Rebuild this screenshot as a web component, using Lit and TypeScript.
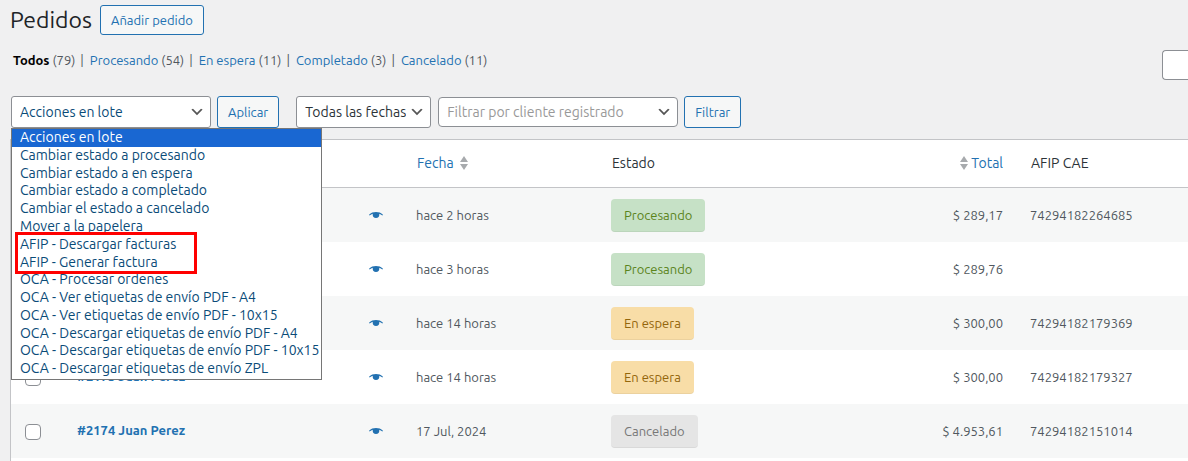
import { LitElement, html, css, svg } from "lit";
import { customElement } from "lit/decorators.js";
import { classMap } from "lit/directives/class-map.js";

interface Order {
  title: string;
  date: string;
  status: "processing" | "on-hold" | "cancelled";
  total: string;
  cae: string;
}

const STATUS_LABELS = {
  processing: "Procesando",
  "on-hold": "En espera",
  cancelled: "Cancelado",
};

const ORDERS: Order[] = [
  { title: "", date: "hace 2 horas", status: "processing", total: "$ 289,17", cae: "74294182264685" },
  { title: "", date: "hace 3 horas", status: "processing", total: "$ 289,76", cae: "" },
  { title: "", date: "hace 14 horas", status: "on-hold", total: "$ 300,00", cae: "74294182179369" },
  { title: "#2175 Juan Perez", date: "hace 14 horas", status: "on-hold", total: "$ 300,00", cae: "74294182179327" },
  { title: "#2174 Juan Perez", date: "17 Jul, 2024", status: "cancelled", total: "$ 4.953,61", cae: "74294182151014" },
];

const VIEWS = [
  { label: "Todos", count: 79, current: true },
  { label: "Procesando", count: 54, current: false },
  { label: "En espera", count: 11, current: false },
  { label: "Completado", count: 3, current: false },
  { label: "Cancelado", count: 11, current: false },
];

const BULK_ACTIONS = [
  "Acciones en lote",
  "Cambiar estado a procesando",
  "Cambiar estado a en espera",
  "Cambiar estado a completado",
  "Cambiar el estado a cancelado",
  "Mover a la papelera",
  "AFIP - Descargar facturas",
  "AFIP - Generar factura",
  "OCA - Procesar ordenes",
  "OCA - Ver etiquetas de envío PDF - A4",
  "OCA - Ver etiquetas de envío PDF - 10x15",
  "OCA - Descargar etiquetas de envío PDF - A4",
  "OCA - Descargar etiquetas de envío PDF - 10x15",
  "OCA - Descargar etiquetas de envío ZPL",
];

const chevron = html`<svg class="chevron" viewBox="0 0 20 20" aria-hidden="true">
  ${svg`<path d="M5 6l5 5 5-5 2 1-7 7-7-7 2-1z" fill="#555"/>`}
</svg>`;

const sorter = html`<svg class="sorter" viewBox="0 0 8 14" aria-hidden="true">
  ${svg`<path d="M4 0l4 6H0zM0 8h8l-4 6z" fill="#a7aaad"/>`}
</svg>`;

const eye = html`<svg class="eye" viewBox="0 0 14 8" aria-hidden="true">
  ${svg`<path d="M0 3.800C2 1.700 4.400 1 7 1s5 .7 7 2.800l-.6.8C12.300 3.700 11.300 3.100 10.200 2.700c.1.300.1.600.1.900A3.300 3.300 0 0 1 7 7a3.300 3.300 0 0 1-3.300-3.400c0-.3 0-.6.1-.9C2.700 3.100 1.700 3.700.6 4.600z" fill="#2271b1"/>`}
</svg>`;

@customElement("app-root")
export class AppRoot extends LitElement {
  static styles = css`
    :host {
      display: block;
      font-family: Ubuntu, "Noto Sans", sans-serif;
      font-size: 13px;
      line-height: 20px;
      color: #50575e;
    }
    * {
      box-sizing: border-box;
    }
    .page {
      display: flex;
      flex-direction: column;
      height: 100vh;
      overflow: hidden;
      background: #f0f0f1;
    }
    a {
      color: #2271b1;
      text-decoration: none;
    }
    .heading {
      display: flex;
      align-items: center;
      gap: 8px;
      padding: 5px 10px 0;
    }
    h1 {
      margin: 0;
      font-size: 23px;
      line-height: 30px;
      font-weight: 400;
      color: #1d2327;
    }
    button {
      height: 32px;
      padding: 0 10px;
      border: 1px solid #2271b1;
      border-radius: 3px;
      background: #f6f7f7;
      color: #2271b1;
      font: inherit;
      white-space: nowrap;
    }
    .heading button {
      height: 30px;
    }
    .views-row {
      display: flex;
      justify-content: space-between;
      margin-top: 15px;
    }
    .views {
      display: flex;
      margin: 0;
      padding: 0 0 0 13px;
      list-style: none;
    }
    .views li + li::before {
      content: "|";
      padding: 0 6px 0 5px;
    }
    .views .current {
      color: #000;
      font-weight: 600;
    }
    .search {
      width: 26px;
      height: 30px;
      border: 1px solid #8c8f94;
      border-right: 0;
      border-radius: 4px 0 0 4px;
      background: #fff;
    }
    .toolbar {
      display: flex;
      align-items: center;
      margin: 16px 0 11px;
      padding-left: 11px;
      gap: 6px;
    }
    .field {
      position: relative;
      display: flex;
    }
    .field select {
      appearance: none;
      width: 100%;
      height: 32px;
      padding: 0 24px 0 8px;
      border: 1px solid #8c8f94;
      border-radius: 3px;
      background: #fff;
      color: #2c3338;
      font: inherit;
      font-size: 14px;
    }
    .field .chevron {
      position: absolute;
      right: 6px;
      top: 8px;
      width: 16px;
      height: 16px;
      pointer-events: none;
    }
    .bulk {
      width: 200px;
    }
    .bulk select {
      color: #0a4b78;
    }
    .dates {
      width: 135px;
      margin-left: 11px;
    }
    .customer {
      width: 240px;
      margin-left: 1px;
    }
    .customer select {
      height: 30px;
      border-radius: 4px;
      color: #999;
    }
    .customer .chevron {
      top: 7px;
    }
    .menu {
      position: absolute;
      z-index: 2;
      top: 100%;
      left: 0;
      display: grid;
      grid-auto-rows: 1fr;
      width: 311px;
      height: 252px;
      margin: 0;
      padding: 0 0 1px;
      border: 1px solid #767676;
      background: #fff;
      color: #0a4b78;
      font-size: 14px;
      line-height: 17px;
      list-style: none;
      white-space: nowrap;
    }
    .menu li {
      padding-left: 8px;
    }
    .menu .selected {
      background: #1967d2;
      color: #fff;
    }
    .highlight {
      position: absolute;
      z-index: 3;
      top: 136px;
      left: 4px;
      width: 182px;
      height: 42px;
      border: 3px solid #f00;
      pointer-events: none;
    }
    .list {
      flex: 1;
      margin-left: 10px;
      border: 1px solid #c3c4c7;
      border-right: 0;
      border-bottom: 0;
      background: #fff;
    }
    table {
      width: 100%;
      border-collapse: separate;
      border-spacing: 0;
      table-layout: fixed;
    }
    th,
    td {
      padding: 0 10px;
      text-align: left;
      vertical-align: middle;
      font-weight: 400;
    }
    th {
      height: 48px;
      padding: 0 10px 2px 11px;
      border-bottom: 1px solid #c3c4c7;
      font-size: 14px;
      color: #2c3338;
    }
    td {
      height: 54px;
    }
    tbody tr:nth-child(odd) {
      background: #f6f7f7;
    }
    .col-check {
      width: 56px;
    }
    .col-preview {
      width: 49px;
    }
    .col-date {
      width: 195px;
    }
    .col-status {
      width: 200px;
    }
    .col-total {
      width: 212px;
    }
    .col-cae {
      width: 175px;
    }
    .check {
      padding-left: 14px;
    }
    .check input {
      appearance: none;
      display: block;
      width: 16px;
      height: 16px;
      margin: 2px 0 0;
      border: 1px solid #8c8f94;
      border-radius: 4px;
      background: #fff;
    }
    .order {
      padding-bottom: 2px;
    }
    .order a {
      font-weight: 700;
    }
    .preview a,
    .eye {
      display: block;
    }
    .preview {
      padding: 0 12px;
    }
    .eye {
      width: 14px;
      height: 8px;
    }
    .sort {
      display: flex;
      align-items: center;
      gap: 6px;
    }
    .total {
      text-align: right;
    }
    .total .sort {
      justify-content: flex-end;
      gap: 3px;
    }
    .sorter {
      width: 8px;
      height: 14px;
    }
    td.cae {
      padding-left: 17px;
    }
    th.cae {
      padding-left: 18px;
    }
    .status {
      display: inline-flex;
      vertical-align: middle;
      padding: 0 13px;
      border-bottom: 1px solid rgba(0, 0, 0, 0.05);
      border-radius: 4px;
      line-height: 32px;
    }
    .processing {
      background: #c6e1c6;
      color: #5b841b;
    }
    .on-hold {
      background: #f8dda7;
      color: #94660c;
    }
    .cancelled {
      background: #e5e5e5;
      color: #777;
    }
  `;

  private renderToolbar() {
    return html`<div class="toolbar">
      <div class="field bulk">
        <select aria-label="Acciones en lote">
          <option>Acciones en lote</option>
        </select>
        ${chevron}
        <ul class="menu" role="listbox" aria-label="Acciones en lote">
          ${BULK_ACTIONS.map(
            (action, i) => html`<li role="option" aria-selected=${i === 0} class=${classMap({ selected: i === 0 })}>${action}</li>`
          )}
        </ul>
        <div class="highlight"></div>
      </div>
      <button type="button">Aplicar</button>
      <div class="field dates">
        <select aria-label="Filtrar por fecha">
          <option>Todas las fechas</option>
        </select>
        ${chevron}
      </div>
      <div class="field customer">
        <select aria-label="Filtrar por cliente registrado">
          <option>Filtrar por cliente registrado</option>
        </select>
        ${chevron}
      </div>
      <button type="button">Filtrar</button>
    </div>`;
  }

  private renderOrder(order: Order) {
    return html`<tr>
      <td class="check"><input type="checkbox" aria-label="Seleccionar pedido" /></td>
      <td class="order">${order.title ? html`<a href="#">${order.title}</a>` : ""}</td>
      <td class="preview"><a href="#" aria-label="Vista previa">${eye}</a></td>
      <td>${order.date}</td>
      <td><span class="status ${order.status}">${STATUS_LABELS[order.status]}</span></td>
      <td class="total">${order.total}</td>
      <td class="cae">${order.cae}</td>
    </tr>`;
  }

  render() {
    return html`<main class="page">
      <header class="heading">
        <h1>Pedidos</h1>
        <button type="button">Añadir pedido</button>
      </header>
      <div class="views-row">
        <ul class="views">
          ${VIEWS.map(
            (view) => html`<li><a href="#" class=${classMap({ current: view.current })}>${view.label}</a> (${view.count})</li>`
          )}
        </ul>
        <input class="search" type="search" aria-label="Buscar pedidos" />
      </div>
      ${this.renderToolbar()}
      <div class="list">
        <table>
          <colgroup>
            <col class="col-check" />
            <col />
            <col class="col-preview" />
            <col class="col-date" />
            <col class="col-status" />
            <col class="col-total" />
            <col class="col-cae" />
          </colgroup>
          <thead>
            <tr>
              <th></th>
              <th></th>
              <th></th>
              <th><a class="sort" href="#">Fecha ${sorter}</a></th>
              <th>Estado</th>
              <th class="total"><a class="sort" href="#">${sorter} Total</a></th>
              <th class="cae">AFIP CAE</th>
            </tr>
          </thead>
          <tbody>
            ${ORDERS.map((order) => this.renderOrder(order))}
          </tbody>
        </table>
      </div>
    </main>`;
  }
}
